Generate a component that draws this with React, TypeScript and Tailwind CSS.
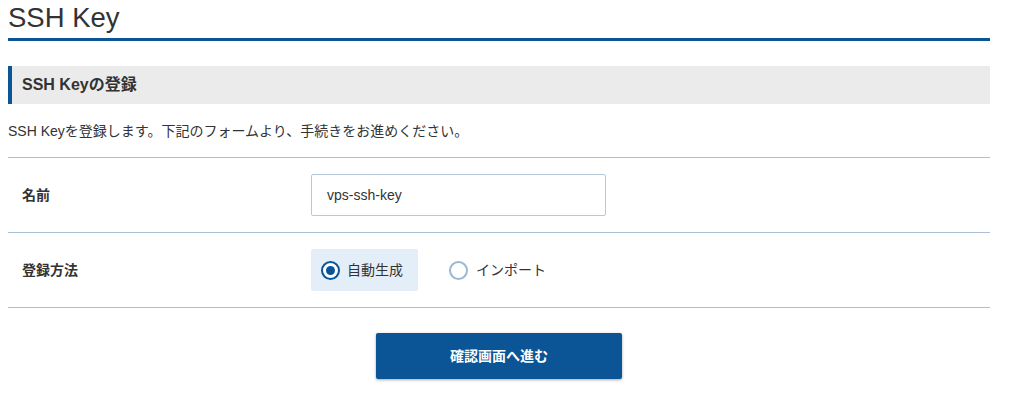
const font = { fontFamily: '"Liberation Sans", "Noto Sans CJK JP", sans-serif' };

const Row = ({ label, children }: { label: string; children: React.ReactNode }) => (
  <div className="flex items-center h-[75px] border-b border-[#a9bfd3]">
    <div className="w-[303px] pl-[14px] text-[14px] font-bold text-[#333]">{label}</div>
    <div className="flex items-center">{children}</div>
  </div>
);

const Radio = ({ checked }: { checked: boolean }) => (
  <span
    className={
      checked
        ? 'w-[19px] h-[19px] rounded-full border-2 border-[#0b5597] bg-white flex items-center justify-center'
        : 'w-[19px] h-[19px] rounded-full border-2 border-[#9ab8d3] bg-white'
    }
  >
    {checked && <span className="w-[9px] h-[9px] rounded-full bg-[#0b5597]" />}
  </span>
);

export default function App() {
  return (
    <div className="w-[1024px] h-[408px] bg-white text-[#333] overflow-hidden" style={font}>
      <div className="ml-[8px] w-[982px]">
        <h1 className="text-[27.5px] leading-[36px] text-[#333] border-b-[3px] border-[#0b5597] pb-[2px]">SSH Key</h1>

        <div className="mt-[25px] h-[38px] bg-[#ebebeb] border-l-4 border-[#0b5597] flex items-center pl-[10px]">
          <h2 className="text-[16px] font-bold text-[#333]">SSH Keyの登録</h2>
        </div>

        <p className="mt-[18px] text-[14px] leading-[18px] text-[#333]">SSH Keyを登録します。下記のフォームより、手続きをお進めください。</p>

        <div className="mt-[17px] border-t border-[#a9bfd3]">
          <Row label="名前">
            <div className="w-[295px] h-[42px] border border-[#b7c8d9] rounded-[2px] flex items-center pl-[15px] text-[14px] text-[#333]">
              vps-ssh-key
            </div>
          </Row>
          <Row label="登録方法">
            <div className="flex items-center gap-[7px] h-[42px] w-[107px] pl-[10px] bg-[#e3eef8] rounded-[2px]">
              <Radio checked />
              <span className="text-[14px]">自動生成</span>
            </div>
            <div className="flex items-center gap-[8px] ml-[31px]">
              <Radio checked={false} />
              <span className="text-[14px]">インポート</span>
            </div>
          </Row>
        </div>

        <div className="flex justify-center pt-[25px]">
          <button className="w-[246px] h-[46px] bg-[#0b5597] text-white text-[14px] font-bold rounded-[2px] shadow-[0_1px_3px_rgba(0,0,0,0.35)]">
            確認画面へ進む
          </button>
        </div>
      </div>
    </div>
  );
}
